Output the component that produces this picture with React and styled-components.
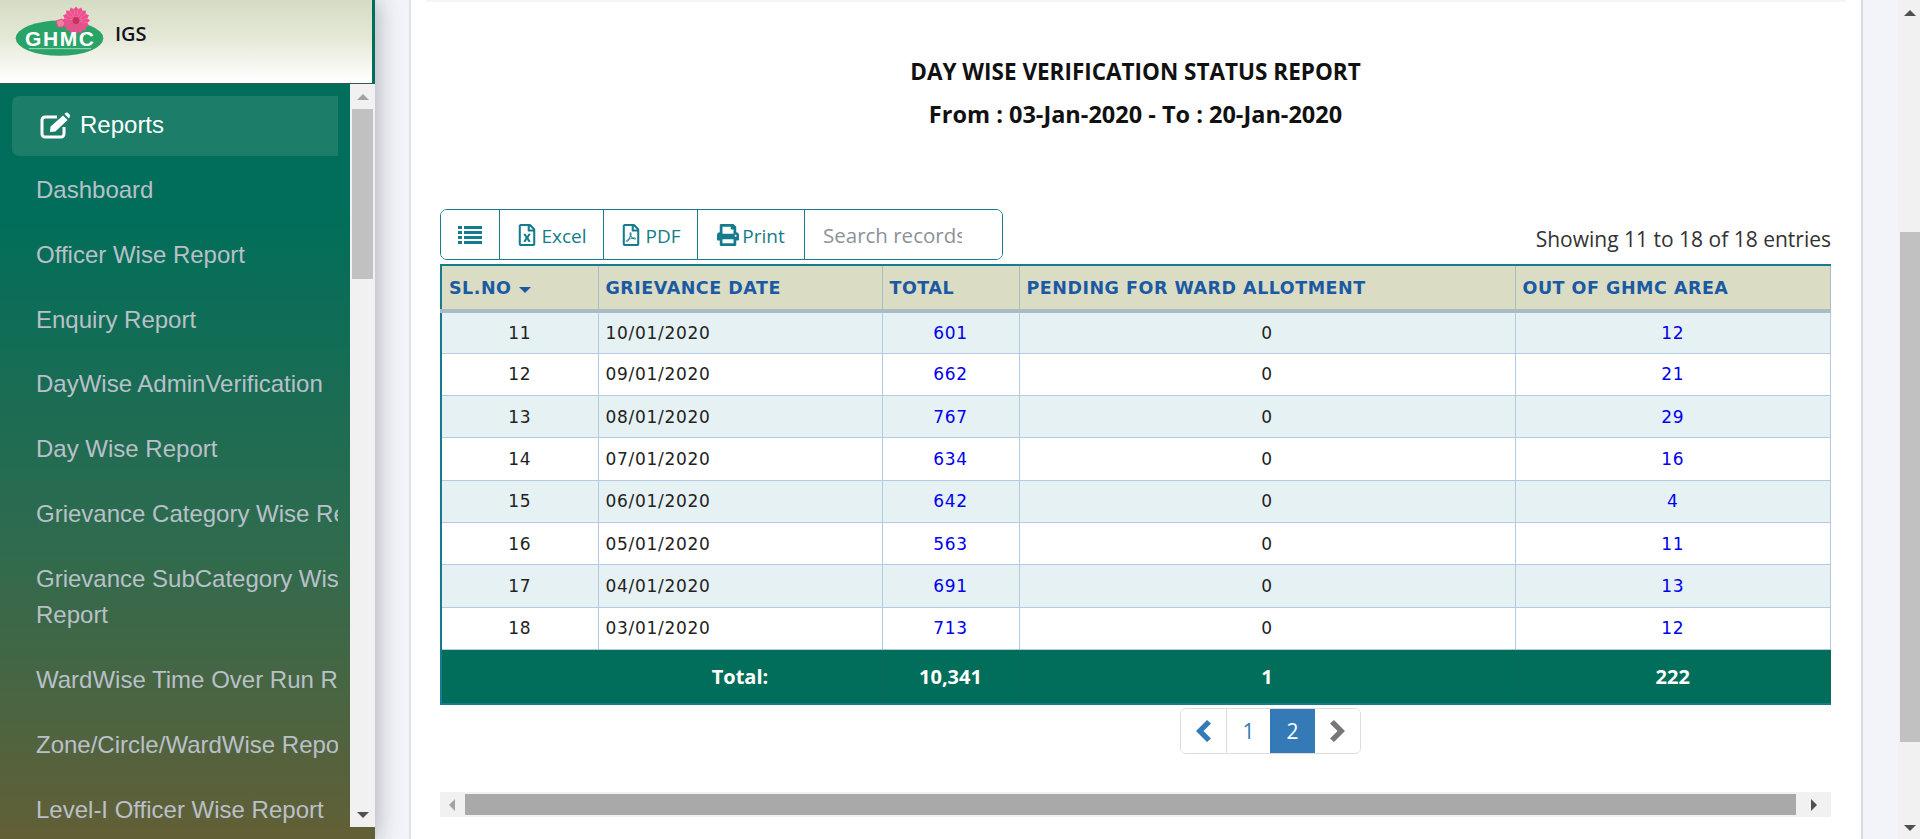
import React from "react";
import styled, { createGlobalStyle } from "styled-components";
import { FaRegFileExcel, FaRegFilePdf, FaPrint } from "react-icons/fa";

const GlobalStyle = createGlobalStyle`
  html, body { margin: 0; padding: 0; height: 100%; overflow: hidden; }
  body { font-family: "Open Sans", sans-serif; background: #f3f4f9; }
  * { box-sizing: border-box; }
`;

const Page = styled.div`
  display: flex;
  width: 1920px;
  height: 839px;
  overflow: hidden;
`;

const Sidebar = styled.aside`
  position: relative;
  z-index: 2;
  flex: 0 0 375px;
  display: flex;
  flex-direction: column;
  background: linear-gradient(180deg, #006e5a 0%, #006e5a 25%, #2f6b4e 65%, #625f36 100%);
  box-shadow: 0 0 24px rgba(30, 30, 50, 0.38);
`;

const Brand = styled.div`
  height: 84px;
  display: flex;
  align-items: flex-start;
  background: linear-gradient(180deg, #d5dcc3 0%, #e4e8d6 45%, #ffffff 96%);
  border-right: 3px solid #006e5a;
  border-bottom: 1px solid #36574d;
`;

const LogoBox = styled.svg`
  flex: 0 0 110px;
  height: 62px;
`;

const BrandName = styled.span`
  margin: 21px 0 0 5px;
  font-size: 20px;
  font-weight: 600;
  line-height: 26px;
  color: #10131c;
`;

const SideBody = styled.div`
  display: flex;
  height: 743px;
`;

const MenuClip = styled.nav`
  flex: 0 0 350px;
  padding: 12px 12px 0 12px;
  overflow: hidden;
`;

const Menu = styled.ul`
  list-style: none;
  margin: 0;
  padding: 0;
  width: 326px;
  overflow: hidden;
  font-family: "Liberation Sans", Arial, sans-serif;
  font-size: 24px;
  line-height: 36.75px;
`;

const ActiveItem = styled.li`
  display: flex;
  align-items: center;
  height: 60px;
  padding: 0 0 2px 28px;
  gap: 9px;
  margin-bottom: 2px;
  color: #fff;
  background: #1c7d68;
  border-radius: 7px 0 0 7px;
`;

const Item = styled.li`
  width: 410px;
  padding: 14px 10px 14px 24px;
  color: #b9c0c8;
`;

const SideTrack = styled.div`
  flex: 0 0 25px;
  display: flex;
  flex-direction: column;
  align-items: center;
  background: #f1f1f1;
`;

const PageTrack = styled.div`
  position: relative;
  z-index: 1;
  flex: 0 0 24px;
  display: flex;
  flex-direction: column;
  align-items: center;
  background: #f1f1f1;
`;

const ArrowUp = styled.i`
  width: 0;
  height: 0;
  margin-top: ${(p) => p.top}px;
  border-left: 6px solid transparent;
  border-right: 6px solid transparent;
  border-bottom: 6px solid ${(p) => p.color};
`;

const ArrowDown = styled.i`
  width: 0;
  height: 0;
  margin-top: auto;
  margin-bottom: ${(p) => p.bottom}px;
  border-left: 6px solid transparent;
  border-right: 6px solid transparent;
  border-top: 6px solid ${(p) => p.color};
`;

const VThumb = styled.div`
  width: 21px;
  height: ${(p) => p.size}px;
  margin-top: ${(p) => p.gap}px;
  background: #c1c1c1;
`;

const Main = styled.main`
  flex: 1;
  padding: 0 35px 0 34px;
  height: 839px;
`;

const Card = styled.section`
  height: 839px;
  padding: 0 15px;
  background: #fff;
  border-left: 2px solid #e1e2e8;
  border-right: 2px solid #d9dae0;
`;

const TopEdge = styled.div`
  height: 2px;
  background: #f4f4f4;
`;

const Report = styled.div`
  padding: 0 15px 0 14px;
`;

const Heading = styled.h2`
  margin: 49px 0 0;
  text-align: center;
  font-weight: 700;
  line-height: 42px;
  color: #111;
`;

const HeadLine = styled.div`
  font-size: ${(p) => p.$size}px;
`;

const ToolRow = styled.div`
  display: flex;
  justify-content: space-between;
  align-items: flex-end;
  margin-top: 74px;
`;

const Tools = styled.div`
  display: flex;
  height: 51px;
  border: 1px solid #167b8c;
  border-radius: 7px;
  overflow: hidden;
`;

const ToolButton = styled.button`
  width: ${(p) => p.$w}px;
  display: flex;
  align-items: center;
  justify-content: center;
  gap: 3px;
  padding: 3px 0 0;
  background: #fff;
  border: 0;
  border-right: 1px solid #167b8c;
  color: #167b8c;
  font-family: "Open Sans", sans-serif;
  font-size: 19px;
  svg { font-size: 22px; margin-top: -2px; }
`;

const Search = styled.input`
  width: 197px;
  padding: 0 40px 0 18px;
  border: 0;
  outline: 0;
  font-family: "Open Sans", sans-serif;
  font-size: 20.5px;
  color: #333;
  &::placeholder { color: #8c9298; opacity: 1; }
`;

const Info = styled.div`
  margin-bottom: 8px;
  font-size: 21px;
  line-height: 26px;
  color: #333;
`;

const Grid = styled.table`
  width: 1391px;
  margin-top: 4px;
  table-layout: fixed;
  border-collapse: collapse;
  border: 2px solid #167b8c;
  border-width: 2px 1px 2px 2px;
  font-family: "DejaVu Sans", Verdana, sans-serif;
`;

const HeadCell = styled.th`
  height: 46px;
  padding: 0 7px;
  text-align: left;
  background: #dbdcc4;
  border: 1px solid #a9bcc6;
  border-top: 0;
  border-bottom: 4px solid #a9bcc6;
  color: #1b5aa3;
  font-size: 17.5px;
  font-weight: 700;
  letter-spacing: 0.5px;
  white-space: nowrap;
`;

const SortCaret = styled.i`
  display: inline-block;
  margin-left: 8px;
  vertical-align: 1px;
  border-left: 6px solid transparent;
  border-right: 6px solid transparent;
  border-top: 6px solid #1b5aa3;
`;

const Row = styled.tr`
  background: ${(p) => (p.$odd ? "#e6f1f3" : "#fff")};
`;

const Cell = styled.td`
  height: 42.3px;
  padding: 0 7px;
  text-align: ${(p) => p.$align || "center"};
  border: 1px solid #b3cbe2;
  color: ${(p) => p.$color || "#222"};
  font-size: 17px;
  letter-spacing: 0.7px;
`;

const TotalCell = styled.td`
  height: 55px;
  text-align: center;
  background: #006e5a;
  border: 1px solid #0b6862;
  border-top: 0;
  color: #fff;
  font-family: "Open Sans", sans-serif;
  font-size: 20px;
  font-weight: 700;
`;

const PagerRow = styled.div`
  display: flex;
  margin-top: 3px;
  padding-left: 740px;
`;

const Pager = styled.div`
  display: flex;
  height: 46px;
  border: 1px solid #ddd;
  border-radius: 6px;
  overflow: hidden;
`;

const PageCell = styled.div`
  width: ${(p) => p.$w}px;
  display: flex;
  align-items: center;
  justify-content: center;
  background: ${(p) => (p.$active ? "#337ab7" : "#fff")};
  border-right: ${(p) => (p.$line ? "1px solid #ddd" : "0")};
  color: ${(p) => (p.$active ? "#fff" : p.$color || "#337ab7")};
  font-size: 21px;
`;

const HScroll = styled.div`
  display: flex;
  align-items: center;
  width: 1391px;
  height: 25px;
  margin-top: 38px;
  padding-right: 7px;
  background: #f1f1f1;
`;

const ArrowLeft = styled.i`
  margin-left: 9px;
  border-top: 6px solid transparent;
  border-bottom: 6px solid transparent;
  border-right: 6px solid #a3a3a3;
`;

const ArrowRight = styled.i`
  margin-left: 15px;
  border-top: 6px solid transparent;
  border-bottom: 6px solid transparent;
  border-left: 6px solid #505050;
`;

const HThumb = styled.div`
  width: 1331px;
  height: 21px;
  margin-left: 10px;
  background: #a9a9a9;
`;

const menuItems = [
  "Dashboard",
  "Officer Wise Report",
  "Enquiry Report",
  "DayWise AdminVerification",
  "Day Wise Report",
  "Grievance Category Wise Report",
  "Grievance SubCategory Wise Report",
  "WardWise Time Over Run Report",
  "Zone/Circle/WardWise Report",
  "Level-I Officer Wise Report",
];

const rows = [
  [11, "10/01/2020", 601, 0, 12],
  [12, "09/01/2020", 662, 0, 21],
  [13, "08/01/2020", 767, 0, 29],
  [14, "07/01/2020", 634, 0, 16],
  [15, "06/01/2020", 642, 0, 4],
  [16, "05/01/2020", 563, 0, 11],
  [17, "04/01/2020", 691, 0, 13],
  [18, "03/01/2020", 713, 0, 12],
];

const petals = Array.from({ length: 16 }, (_, i) => i * 22.5);

const Logo = () => (
  <LogoBox viewBox="0 0 110 62">
    <ellipse cx="59.5" cy="38.2" rx="43.8" ry="17.6" fill="#2aa368" />
    {petals.map((a) => (
      <path key={a} d="M76 20.5 L73.8 9 L76 6.5 L78.2 9 Z" fill="#ee4f8e" transform={`rotate(${a} 76 20.5)`} />
    ))}
    <circle cx="76" cy="20.5" r="3.4" fill="#c9305f" />
    <path d="M56 21 L62 19 L65 23 L63 27 L58 27 Z" fill="#f47ba6" stroke="#e14f86" strokeWidth="1" />
    <text x="59.5" y="45.5" textAnchor="middle" textLength="69" fill="#fff" fontFamily="Liberation Sans, Arial, sans-serif" fontSize="21" fontWeight="700">
      GHMC
    </text>
    <rect x="29" y="48" width="62" height="1.2" fill="#8fd0ad" />
  </LogoBox>
);

const EditIcon = () => (
  <svg width="31" height="27" viewBox="0 0 31 27" fill="none">
    <path d="M17 5 H5 a3 3 0 0 0 -3 3 V22 a3 3 0 0 0 3 3 H21 a3 3 0 0 0 3 -3 V15" stroke="#fff" strokeWidth="3" />
    <path d="M10 20 L10.6 14.6 L23 3.4 L27.6 8 L15.4 19.6 Z" fill="#fff" />
    <path d="M24.4 2 L25.8 0.8 Q26.8 0 27.8 0.8 L29.8 2.8 Q30.6 3.8 29.8 4.8 L29 6.6 Z" fill="#fff" />
  </svg>
);

const ListIcon = () => (
  <svg width="24" height="18" viewBox="0 0 24 18" fill="#167b8c">
    {[0, 5, 10, 15].map((y) => (
      <g key={y}>
        <rect x="0" y={y} width="4" height="3" />
        <rect x="6" y={y} width="18" height="3" />
      </g>
    ))}
  </svg>
);

const ChevronLeft = ({ color }) => (
  <svg width="15" height="22" viewBox="0 0 15 22" fill={color}>
    <path d="M11 0 L15 3.5 L7.5 11 L15 18.5 L11 22 L0 11 Z" />
  </svg>
);

const ChevronRight = ({ color }) => (
  <svg width="15" height="22" viewBox="0 0 15 22" fill={color}>
    <path d="M4 0 L0 3.5 L7.5 11 L0 18.5 L4 22 L15 11 Z" />
  </svg>
);

export default function App() {
  return (
    <Page>
      <GlobalStyle />
      <Sidebar>
        <Brand>
          <Logo />
          <BrandName>IGS</BrandName>
        </Brand>
        <SideBody>
          <MenuClip>
            <Menu>
              <ActiveItem>
                <EditIcon />
                Reports
              </ActiveItem>
              {menuItems.map((m) => (
                <Item key={m}>{m}</Item>
              ))}
            </Menu>
          </MenuClip>
          <SideTrack>
            <ArrowUp top={10} color="#a3a3a3" />
            <VThumb size={170} gap={9} />
            <ArrowDown bottom={9} color="#505050" />
          </SideTrack>
        </SideBody>
      </Sidebar>

      <Main>
        <Card>
          <TopEdge />
          <Report>
            <Heading>
              <HeadLine $size={22.5}>DAY WISE VERIFICATION STATUS REPORT</HeadLine>
              <HeadLine $size={23.5}>From : 03-Jan-2020 - To : 20-Jan-2020</HeadLine>
            </Heading>
            <ToolRow>
              <Tools>
                <ToolButton $w={59}><ListIcon /></ToolButton>
                <ToolButton $w={104}><FaRegFileExcel />Excel</ToolButton>
                <ToolButton $w={94}><FaRegFilePdf />PDF</ToolButton>
                <ToolButton $w={107}><FaPrint />Print</ToolButton>
                <Search placeholder="Search records" />
              </Tools>
              <Info>Showing 11 to 18 of 18 entries</Info>
            </ToolRow>
            <Grid>
              <colgroup>
                <col style={{ width: 157 }} />
                <col style={{ width: 284 }} />
                <col style={{ width: 137 }} />
                <col style={{ width: 496 }} />
                <col />
              </colgroup>
              <thead>
                <tr>
                  <HeadCell>SL.NO<SortCaret /></HeadCell>
                  <HeadCell>GRIEVANCE DATE</HeadCell>
                  <HeadCell>TOTAL</HeadCell>
                  <HeadCell>PENDING FOR WARD ALLOTMENT</HeadCell>
                  <HeadCell>OUT OF GHMC AREA</HeadCell>
                </tr>
              </thead>
              <tbody>
                {rows.map((r, i) => (
                  <Row key={r[0]} $odd={i % 2 === 0}>
                    <Cell>{r[0]}</Cell>
                    <Cell $align="left">{r[1]}</Cell>
                    <Cell $color="#0000ee">{r[2]}</Cell>
                    <Cell>{r[3]}</Cell>
                    <Cell $color="#0000ee">{r[4]}</Cell>
                  </Row>
                ))}
              </tbody>
              <tfoot>
                <tr>
                  <TotalCell />
                  <TotalCell>Total:</TotalCell>
                  <TotalCell>10,341</TotalCell>
                  <TotalCell>1</TotalCell>
                  <TotalCell>222</TotalCell>
                </tr>
              </tfoot>
            </Grid>
            <PagerRow>
              <Pager>
                <PageCell $w={46} $line><ChevronLeft color="#337ab7" /></PageCell>
                <PageCell $w={43}>1</PageCell>
                <PageCell $w={45} $active>2</PageCell>
                <PageCell $w={45}><ChevronRight color="#777" /></PageCell>
              </Pager>
            </PagerRow>
            <HScroll>
              <ArrowLeft />
              <HThumb />
              <ArrowRight />
            </HScroll>
          </Report>
        </Card>
      </Main>

      <PageTrack>
        <ArrowUp top={10} color="#505050" />
        <VThumb size={510} gap={216} />
        <ArrowDown bottom={8} color="#505050" />
      </PageTrack>
    </Page>
  );
}
